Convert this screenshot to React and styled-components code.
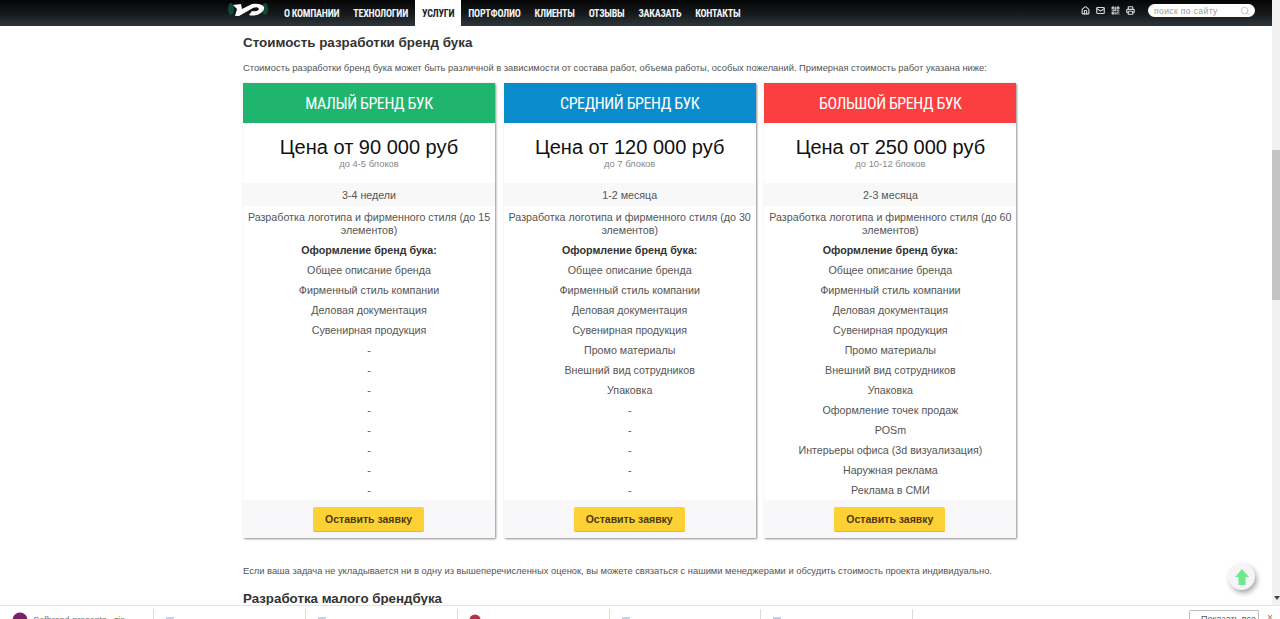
import React from 'react';
import styled, { createGlobalStyle } from 'styled-components';
import { Home, Mail, QrCode, Printer, Search } from 'lucide-react';

const GlobalStyle = createGlobalStyle`
  html, body { margin: 0; padding: 0; height: 100%; overflow: hidden; background: #fff; }
  * { box-sizing: border-box; }
`;

const Page = styled.div`
  width: 1280px;
  height: 619px;
  display: flex;
  flex-direction: column;
  overflow: hidden;
  position: relative;
  font-family: 'Liberation Sans', Arial, sans-serif;
  color: #444;
`;

const Viewport = styled.div`
  flex: 1;
  min-height: 0;
  display: flex;
`;

const Column = styled.div`
  flex: 1;
  min-width: 0;
  display: flex;
  flex-direction: column;
`;

const TopBar = styled.header`
  height: 26px;
  flex: none;
  display: flex;
  align-items: stretch;
  padding: 0 17px 0 228px;
  background: linear-gradient(#050505 0%, #14181b 50%, #2f363b 100%);
`;

const Logo = styled.svg`
  width: 40px;
  height: 18px;
  margin-right: 9px;
`;

const Nav = styled.nav`
  display: flex;
  align-items: stretch;
`;

const NavItem = styled.a`
  display: flex;
  align-items: center;
  padding: 0 7px;
  background: ${p => (p.$active ? '#fff' : 'transparent')};
  color: ${p => (p.$active ? '#222' : '#f2f2f2')};
  font-family: Roboto, sans-serif;
  font-stretch: 75%;
  font-size: 10px;
  letter-spacing: -0.25px;
  font-weight: 700;
  white-space: nowrap;
`;

const Tools = styled.div`
  margin-left: auto;
  display: flex;
  align-items: center;
  gap: 6px;
  color: #d4d4d4;
  padding-bottom: 5px;
`;

const SearchBox = styled.div`
  width: 107px;
  height: 13px;
  margin-left: 7px;
  padding: 0 5px 0 6px;
  display: flex;
  align-items: center;
  justify-content: space-between;
  background: #fff;
  border-radius: 7px;
  color: #999;
  font-size: 8.5px;
  letter-spacing: 0.4px;
`;

const Scrollbar = styled.div`
  width: 8px;
  flex: none;
  display: flex;
  flex-direction: column;
  align-items: center;
  padding: 150px 0 5px;
  background: #f1f1f1;
`;

const ScrollThumb = styled.div`
  width: 8px;
  height: 150px;
  background: #c4c4c4;
`;

const ScrollArrow = styled.div`
  margin-top: auto;
  width: 0;
  height: 0;
  margin-left: 2px;
  border-left: 3px solid transparent;
  border-right: 3px solid transparent;
  border-top: 4px solid #444;
`;

const Main = styled.main`
  flex: 1;
  min-height: 0;
  overflow: hidden;
  padding: 9px 0 0 243px;
`;

const Heading = styled.h2`
  margin: 0;
  font-size: 13.4px;
  line-height: 16px;
  font-weight: 700;
  color: #333;
`;

const Lead = styled.p`
  margin: 11px 0 0;
  font-size: 9.36px;
  line-height: 12px;
  color: #555;
  white-space: nowrap;
`;

const Cards = styled.div`
  display: flex;
  gap: 8.7px;
  margin-top: 9px;
  width: 774px;
`;

const Card = styled.section`
  width: 252px;
  height: 455px;
  display: flex;
  flex-direction: column;
  background: #fff;
  box-shadow: 1px 1px 2px #8f8f8f, -0.5px 0 1px #ddd;
`;

const CardHeader = styled.div`
  height: 40px;
  flex: none;
  display: flex;
  align-items: center;
  justify-content: center;
  padding-top: 1px;
  background: ${p => p.$color};
  color: #fff;
  font-family: Roboto, sans-serif;
  font-stretch: 75%;
  font-size: 16px;
  letter-spacing: -0.4px;
`;

const PriceBlock = styled.div`
  height: 60px;
  flex: none;
  padding-top: 13px;
  text-align: center;
`;

const Price = styled.div`
  font-size: 20px;
  line-height: 23px;
  color: #111;
`;

const PriceNote = styled.div`
  font-size: 9.4px;
  line-height: 10px;
  color: #888;
`;

const Duration = styled.div`
  height: 23px;
  flex: none;
  display: flex;
  align-items: center;
  justify-content: center;
  background: #f8f8f8;
  font-size: 10.7px;
  color: #555;
`;

const Row = styled.div`
  height: ${p => (p.$tall ? '34px' : '20px')};
  flex: none;
  padding: ${p => (p.$tall ? '5px 4px 0' : '0 4px')};
  text-align: center;
  font-size: 10.7px;
  line-height: ${p => (p.$tall ? '12.5px' : '20px')};
  font-weight: ${p => (p.$bold ? 700 : 400)};
  color: ${p => (p.$bold ? '#333' : '#555')};
`;

const CardFooter = styled.div`
  margin-top: auto;
  height: 38px;
  display: flex;
  justify-content: center;
  padding: 7px 1px 0 0;
  background: #f8f7f9;
`;

const OrderButton = styled.button`
  width: 111px;
  height: 24px;
  padding: 0;
  border: 0;
  border-radius: 2px;
  background: #fdd034;
  box-shadow: 0 1px 0 #e8b42a;
  color: #4b3a12;
  font-family: inherit;
  font-size: 10.5px;
  font-weight: 700;
`;

const Note = styled.p`
  margin: 27px 0 0;
  font-size: 9.35px;
  line-height: 12px;
  color: #555;
  white-space: nowrap;
`;

const SubHeading = styled.h2`
  margin: 14px 0 0;
  font-size: 13.3px;
  line-height: 16px;
  font-weight: 700;
  color: #333;
`;

const UpButton = styled.div`
  position: absolute;
  left: 1228px;
  top: 563px;
  width: 27px;
  height: 27px;
  display: flex;
  align-items: center;
  justify-content: center;
  border-radius: 50%;
  background: #f6f4f6;
  box-shadow: 2px 3px 5px #aaa;
`;

const Downloads = styled.footer`
  height: 14px;
  flex: none;
  display: flex;
  align-items: flex-start;
  background: #fff;
  border-top: 1px solid #e4e4e4;
  overflow: hidden;
`;

const DownloadItem = styled.div`
  width: ${p => p.$width}px;
  height: 11px;
  margin-top: 3px;
  flex: none;
  display: flex;
  align-items: flex-start;
  gap: 5px;
  padding: ${p => p.$top}px 0 0 ${p => p.$pad}px;
  border-right: 1px solid #dcdcdc;
`;

const DownloadName = styled.span`
  margin-top: 3px;
  font-size: 8.9px;
  line-height: 10px;
  color: #777;
  white-space: nowrap;
`;

const ShowAll = styled.div`
  width: 70px;
  height: 14px;
  margin: 4px 0 0 276px;
  padding: 3px 0 0 11px;
  border: 1px solid #bbb;
  border-bottom: 0;
  border-radius: 2px 2px 0 0;
  font-size: 9px;
  line-height: 10px;
  color: #555;
  white-space: nowrap;
`;

const CloseBar = styled.div`
  margin: 7px 0 0 8px;
  font-size: 10px;
  line-height: 10px;
  color: #777;
`;

const plans = [
  {
    title: 'МАЛЫЙ БРЕНД БУК', color: '#1fb56e', price: 'Цена от 90 000 руб', note: 'до 4-5 блоков',
    time: '3-4 недели', count: 15,
    items: ['Общее описание бренда', 'Фирменный стиль компании', 'Деловая документация', 'Сувенирная продукция', '-', '-', '-', '-', '-', '-', '-', '-'],
  },
  {
    title: 'СРЕДНИЙ БРЕНД БУК', color: '#0a8ccc', price: 'Цена от 120 000 руб', note: 'до 7 блоков',
    time: '1-2 месяца', count: 30,
    items: ['Общее описание бренда', 'Фирменный стиль компании', 'Деловая документация', 'Сувенирная продукция', 'Промо материалы', 'Внешний вид сотрудников', 'Упаковка', '-', '-', '-', '-', '-'],
  },
  {
    title: 'БОЛЬШОЙ БРЕНД БУК', color: '#fb3f40', price: 'Цена от 250 000 руб', note: 'до 10-12 блоков',
    time: '2-3 месяца', count: 60,
    items: ['Общее описание бренда', 'Фирменный стиль компании', 'Деловая документация', 'Сувенирная продукция', 'Промо материалы', 'Внешний вид сотрудников', 'Упаковка', 'Оформление точек продаж', 'POSm', 'Интерьеры офиса (3d визуализация)', 'Наружная реклама', 'Реклама в СМИ'],
  },
];

const navItems = ['О КОМПАНИИ', 'ТЕХНОЛОГИИ', 'УСЛУГИ', 'ПОРТФОЛИО', 'КЛИЕНТЫ', 'ОТЗЫВЫ', 'ЗАКАЗАТЬ', 'КОНТАКТЫ'];

const DocIcon = () => (
  <svg width="10" height="10" viewBox="0 0 10 10"><rect x="1" y="1" width="8" height="8" fill="#c5d0e6" /></svg>
);

export default function App() {
  return (
    <Page>
      <GlobalStyle />
      <Viewport>
        <Column>
          <TopBar>
            <Logo viewBox="0 0 40 18">
              <ellipse cx="3" cy="9" rx="3" ry="6" fill="#0f4a38" />
              <ellipse cx="37" cy="9" rx="3" ry="6" fill="#0f4a38" />
              <path d="M5 5 L13 4 L14 9 L24 4 Q33 3 36 7 Q37 12 29 15 Q24 16 21 15 L24 11 Q30 12 31 9 Q30 6 25 8 L11 16 L7 16 L9 9 Z" fill="#fff" />
            </Logo>
            <Nav>
              {navItems.map(item => (
                <NavItem key={item} $active={item === 'УСЛУГИ'}>{item}</NavItem>
              ))}
            </Nav>
            <Tools>
              <Home size={9} strokeWidth={3} />
              <Mail size={9} strokeWidth={3} />
              <QrCode size={9} strokeWidth={3} />
              <Printer size={9} strokeWidth={3} />
              <SearchBox>
                поиск по сайту
                <Search size={10} color="#bbb" />
              </SearchBox>
            </Tools>
          </TopBar>
          <Main>
            <Heading>Стоимость разработки бренд бука</Heading>
            <Lead>Стоимость разработки бренд бука может быть различной в зависимости от состава работ, объема работы, особых пожеланий. Примерная стоимость работ указана ниже:</Lead>
            <Cards>
              {plans.map(plan => (
                <Card key={plan.title}>
                  <CardHeader $color={plan.color}>{plan.title}</CardHeader>
                  <PriceBlock>
                    <Price>{plan.price}</Price>
                    <PriceNote>{plan.note}</PriceNote>
                  </PriceBlock>
                  <Duration>{plan.time}</Duration>
                  <Row $tall>Разработка логотипа и фирменного стиля (до {plan.count} элементов)</Row>
                  <Row $bold>Оформление бренд бука:</Row>
                  {plan.items.map((item, i) => (
                    <Row key={i}>{item}</Row>
                  ))}
                  <CardFooter>
                    <OrderButton>Оставить заявку</OrderButton>
                  </CardFooter>
                </Card>
              ))}
            </Cards>
            <Note>Если ваша задача не укладывается ни в одну из вышеперечисленных оценок, вы можете связаться с нашими менеджерами и обсудить стоимость проекта индивидуально.</Note>
            <SubHeading>Разработка малого брендбука</SubHeading>
          </Main>
        </Column>
        <Scrollbar>
          <ScrollThumb />
          <ScrollArrow />
        </Scrollbar>
      </Viewport>
      <UpButton>
        <svg width="14" height="16" viewBox="0 0 14 16">
          <path d="M7 0 L14 8 L10.5 8 L10.5 16 L3.5 16 L3.5 8 L0 8 Z" fill="#6fe88d" />
        </svg>
      </UpButton>
      <Downloads>
        <DownloadItem $width={154} $pad={12} $top={3}>
          <svg width="16" height="16" viewBox="0 0 16 16">
            <circle cx="8" cy="8" r="7.5" fill="#7a1f6a" />
          </svg>
          <DownloadName>Cofbrand-presents...zip</DownloadName>
        </DownloadItem>
        <DownloadItem $width={152} $pad={11} $top={7}><DocIcon /></DownloadItem>
        <DownloadItem $width={152} $pad={11} $top={7}><DocIcon /></DownloadItem>
        <DownloadItem $width={152} $pad={11} $top={5}>
          <svg width="12" height="12" viewBox="0 0 12 12"><circle cx="6" cy="6" r="5.5" fill="#b5304a" /></svg>
        </DownloadItem>
        <DownloadItem $width={151} $pad={11} $top={7}><DocIcon /></DownloadItem>
        <DownloadItem $width={152} $pad={11} $top={7}><DocIcon /></DownloadItem>
        <ShowAll>Показать все</ShowAll>
        <CloseBar>×</CloseBar>
      </Downloads>
    </Page>
  );
}
